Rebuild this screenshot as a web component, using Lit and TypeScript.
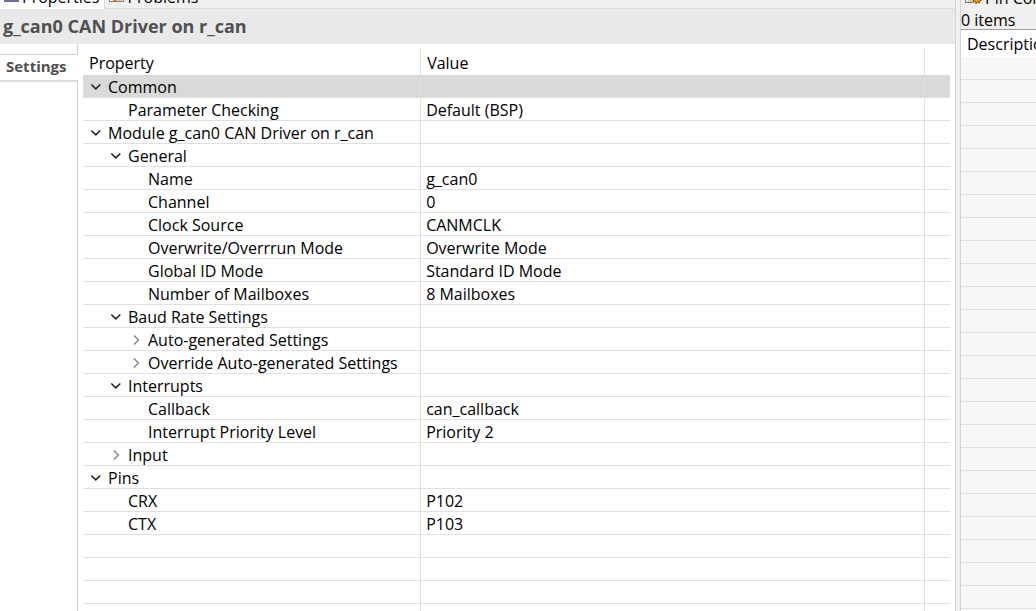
import { LitElement, html, svg, css, nothing } from "lit";
import { customElement, state } from "lit/decorators.js";
import { classMap } from "lit/directives/class-map.js";

interface Item {
  label: string;
  level: number;
  value?: string;
  open?: boolean;
}

const ITEMS: Item[] = [
  { label: "Common", level: 0, open: true },
  { label: "Parameter Checking", level: 1, value: "Default (BSP)" },
  { label: "Module g_can0 CAN Driver on r_can", level: 0, open: true },
  { label: "General", level: 1, open: true },
  { label: "Name", level: 2, value: "g_can0" },
  { label: "Channel", level: 2, value: "0" },
  { label: "Clock Source", level: 2, value: "CANMCLK" },
  { label: "Overwrite/Overrrun Mode", level: 2, value: "Overwrite Mode" },
  { label: "Global ID Mode", level: 2, value: "Standard ID Mode" },
  { label: "Number of Mailboxes", level: 2, value: "8 Mailboxes" },
  { label: "Baud Rate Settings", level: 1, open: true },
  { label: "Auto-generated Settings", level: 2, open: false },
  { label: "Override Auto-generated Settings", level: 2, open: false },
  { label: "Interrupts", level: 1, open: true },
  { label: "Callback", level: 2, value: "can_callback" },
  { label: "Interrupt Priority Level", level: 2, value: "Priority 2" },
  { label: "Input", level: 1, open: false },
  { label: "Pins", level: 0, open: true },
  { label: "CRX", level: 1, value: "P102" },
  { label: "CTX", level: 1, value: "P103" },
];

const BLANK_ROWS = Array.from({ length: 60 });

const tableStyles = css`
  table {
    width: 100%;
    border-collapse: separate;
    border-spacing: 0;
    table-layout: fixed;
  }
  th,
  td {
    box-sizing: border-box;
    height: 23px;
    padding: 2px 0 0;
    border-bottom: 1px solid #e0e0e0;
    font-weight: 400;
    text-align: left;
    line-height: 20px;
    white-space: nowrap;
    overflow: hidden;
  }
  thead th {
    height: 26px;
    border-bottom: 0;
    line-height: 24px;
  }
`;

@customElement("property-table")
export class PropertyTable extends LitElement {
  static styles = [
    tableStyles,
    css`
      :host {
        display: block;
        min-width: 0;
        overflow: hidden;
      }
      .name-col {
        width: 39%;
      }
      .rest-col {
        width: 25px;
      }
      .ruled {
        border-right: 1px solid #e0e0e0;
      }
      thead th {
        padding-left: 6px;
      }
      .value {
        padding-left: 5px;
      }
      .selected th,
      .selected td {
        background: #d9d9d9;
      }
      .cell {
        display: flex;
        align-items: center;
        padding-left: 5px;
      }
      .level-1 {
        padding-left: 25px;
      }
      .level-2 {
        padding-left: 45px;
      }
      .twisty {
        display: flex;
        flex: none;
        width: 16px;
        height: 16px;
        margin: 0 4px 0 0;
        padding: 0;
        border: 0;
        background: none;
      }
      .twisty path {
        fill: none;
        stroke: #222;
        stroke-width: 1.5;
      }
      .closed path {
        stroke: #8a8a8a;
      }
    `,
  ];

  @state() private items = ITEMS;
  @state() private selected = "Common";

  private toggle(item: Item) {
    this.items = this.items.map((i) => (i === item ? { ...i, open: !i.open } : i));
  }

  private visibleItems() {
    let hiddenBelow = Infinity;
    return this.items.filter((item) => {
      if (item.level > hiddenBelow) return false;
      hiddenBelow = item.open === false ? item.level : Infinity;
      return true;
    });
  }

  private twisty(item: Item) {
    if (item.open === undefined) return html`<span class="twisty"></span>`;
    const shape = item.open ? "M3.3 5.5 L7.8 9.9 L12.3 5.5" : "M6 3.5 L10.4 8 L6 12.5";
    return html`<button
      class=${classMap({ twisty: true, closed: !item.open })}
      aria-label=${item.label}
      aria-expanded=${item.open}
      @click=${() => this.toggle(item)}
    >
      <svg width="16" height="16" viewBox="0 0 16 16">${svg`<path d=${shape} />`}</svg>
    </button>`;
  }

  render() {
    return html`<table>
      <colgroup>
        <col class="name-col" />
        <col />
        <col class="rest-col" />
      </colgroup>
      <thead>
        <tr>
          <th class="ruled">Property</th>
          <th class="ruled">Value</th>
          <th></th>
        </tr>
      </thead>
      <tbody>
        ${this.visibleItems().map(
          (item) => html`<tr
            class=${item.label === this.selected ? "selected" : nothing}
            @click=${() => (this.selected = item.label)}
          >
            <th class="ruled" scope="row">
              <div class="cell level-${item.level}">${this.twisty(item)}${item.label}</div>
            </th>
            <td class="ruled value">${item.value}</td>
            <td></td>
          </tr>`,
        )}
        ${BLANK_ROWS.map(
          () => html`<tr>
            <td class="ruled"></td>
            <td class="ruled"></td>
            <td></td>
          </tr>`,
        )}
      </tbody>
    </table>`;
  }
}

@customElement("problem-list")
export class ProblemList extends LitElement {
  static styles = [
    tableStyles,
    css`
      :host {
        display: block;
        overflow: hidden;
        background: #f7f7f7;
      }
      thead th {
        height: 27px;
        padding-left: 6px;
        background: #fff;
        line-height: 25px;
      }
    `,
  ];

  render() {
    return html`<table>
      <thead>
        <tr><th>Description</th></tr>
      </thead>
      <tbody>
        ${BLANK_ROWS.map(() => html`<tr><td></td></tr>`)}
      </tbody>
    </table>`;
  }
}

@customElement("app-root")
export class AppRoot extends LitElement {
  static styles = css`
    :host {
      display: flex;
      height: 100vh;
      overflow: hidden;
      background: #f0f0f0;
      color: #000;
      font-family: "Open Sans", "Noto Sans", sans-serif;
      font-size: 16px;
    }
    .editor {
      display: flex;
      flex: 1;
      flex-direction: column;
      min-width: 0;
      border-right: 1px solid #d4d4d4;
      background: #fff;
    }
    .tabs {
      display: flex;
      flex: none;
      height: 9px;
      overflow: hidden;
      background: #f0f0f0;
    }
    .tab {
      display: flex;
      box-sizing: border-box;
      align-items: flex-end;
      gap: 3px;
      padding: 0 5px 0 4px;
      border: 0;
      border-bottom: 1px solid #dcdcdc;
      background: none;
      color: inherit;
      font: inherit;
      line-height: 22px;
      white-space: nowrap;
    }
    .tab svg {
      flex: none;
      margin-bottom: 5px;
    }
    .active {
      border-right: 1px solid #dcdcdc;
      border-bottom-color: #fff;
      background: #fff;
    }
    .spare {
      flex: 1;
      border-bottom: 1px solid #dcdcdc;
    }
    h1 {
      flex: none;
      margin: 0;
      padding: 0 3px;
      background: #e9e9e9;
      color: #505050;
      font-size: 18px;
      font-weight: 700;
      line-height: 35px;
      white-space: nowrap;
    }
    .body {
      display: flex;
      flex: 1;
      min-height: 0;
    }
    nav {
      display: flex;
      flex: none;
      flex-direction: column;
      width: 78px;
    }
    .lead,
    .tail {
      box-sizing: border-box;
      border-right: 1px solid #d4d4d4;
    }
    .lead {
      height: 11px;
      border-bottom: 1px solid #d4d4d4;
    }
    .tail {
      flex: 1;
      border-top: 2px solid #dcdcdc;
    }
    .section {
      padding: 0 0 2px 6px;
      border: 0;
      background: none;
      color: #505050;
      font-family: inherit;
      font-size: 15px;
      font-weight: 700;
      line-height: 23px;
      text-align: left;
    }
    property-table {
      flex: 1;
      margin: 5px 5px 0;
    }
    aside {
      display: flex;
      flex: none;
      flex-direction: column;
      width: 75px;
      margin-left: 4px;
      border-left: 1px solid #d4d4d4;
      overflow: hidden;
    }
    aside .tab {
      border-bottom: 0;
    }
    .count {
      flex: none;
      height: 20px;
      border-bottom: 1px solid #a0a0a0;
      line-height: 22px;
    }
    problem-list {
      flex: 1;
    }
  `;

  render() {
    return html`
      <main class="editor">
        <div class="tabs">
          <button class="tab active">
            <svg width="15" height="14" viewBox="0 0 15 14">
              <path d="M0.500 12V1h14v11" fill="#fff" stroke="#66719c" />
              <path d="M0 12h15" stroke="#66719c" stroke-width="2" />
            </svg>
            Properties
          </button>
          <button class="tab">
            <svg width="15" height="15" viewBox="0 0 15 15">
              <rect x="0.500" y="0.500" width="14" height="13" fill="#fff" stroke="#66809c" />
              <path d="M4 9h4v4h-4z" fill="#e08a1e" />
              <path d="M9 9h4v4h-4z" fill="#f0c060" />
            </svg>
            Problems
          </button>
          <span class="spare"></span>
        </div>
        <h1>g_can0 CAN Driver on r_can</h1>
        <div class="body">
          <nav>
            <span class="lead"></span>
            <button class="section">Settings</button>
            <span class="tail"></span>
          </nav>
          <property-table></property-table>
        </div>
      </main>
      <aside>
        <div class="tabs">
          <button class="tab">
            <svg width="17" height="14" viewBox="0 0 17 14">
              <path d="M0.500 1v11.500h8" fill="none" stroke="#4f7fae" />
              <path d="M3 9h4v3h-4z" fill="#efc79b" />
              <circle cx="12" cy="9" r="4" fill="#d99a16" stroke="#6b4a08" stroke-dasharray="2 1" stroke-width="1.500" />
            </svg>
            Pin Conflicts
          </button>
        </div>
        <div class="count">0 items</div>
        <problem-list></problem-list>
      </aside>
    `;
  }
}
